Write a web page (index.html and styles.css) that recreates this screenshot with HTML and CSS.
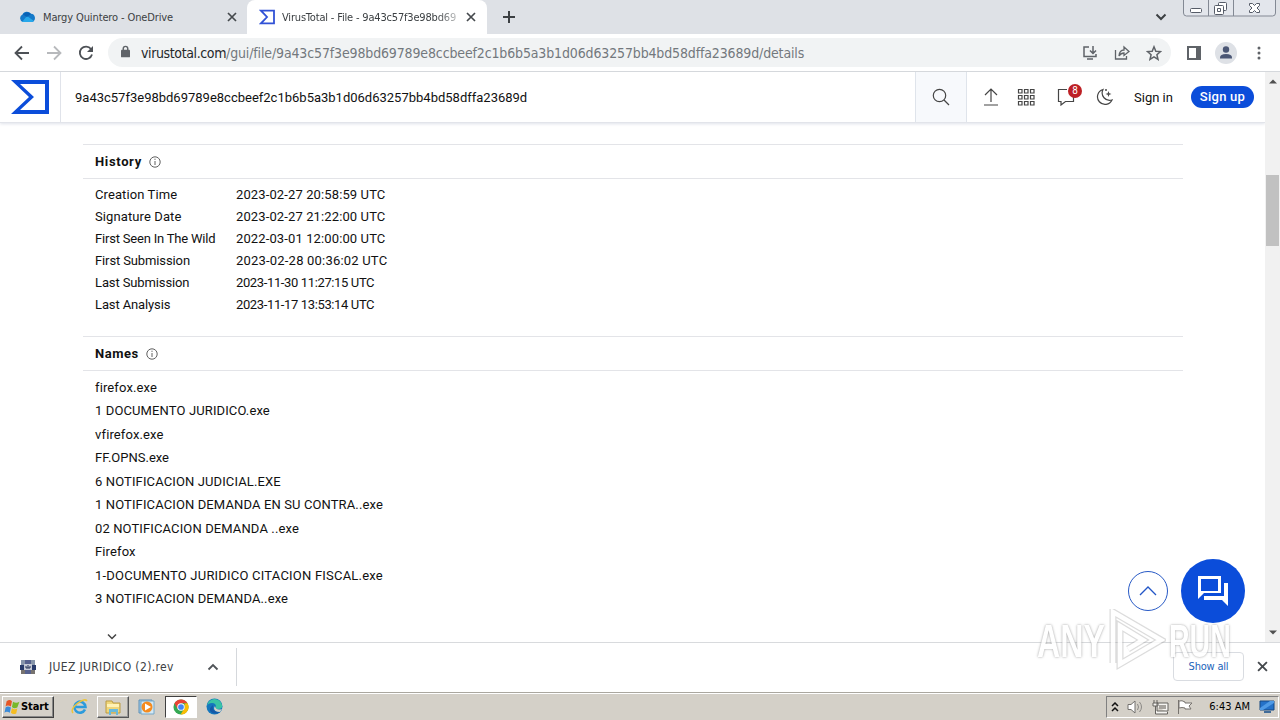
FILE: index.html
```html
<!DOCTYPE html>
<html lang="en">
<head>
<meta charset="utf-8">
<title>VirusTotal - File</title>
<link rel="stylesheet" href="styles.css">
</head>
<body>
<div class="screen">
  <div class="tabstrip">
    <div class="tab tab-idle">
      <svg class="cloud" width="17" height="12" viewBox="0 0 17 12"><path d="M4 11a4 4 0 0 1-.5-7.500A5 5 0 0 1 12 2.800a4.200 4.200 0 0 1 1 8.200Z" fill="#1479c9"/><path d="M3 11 8 5l7 5q-1 1-2.500 1Z" fill="#28a8ea"/><path d="M4 3.500A5 5 0 0 1 12 3L8 6Z" fill="#0962b5"/></svg>
      <span class="tab-title one">Margy Quintero - OneDrive</span>
      <svg class="tab-x" width="10" height="10" viewBox="0 0 10 10"><path d="m1 1 8 8M9 1 1 9"/></svg>
    </div>
    <div class="tab tab-active">
      <svg width="17" height="16" viewBox="0 0 17 16"><path d="M2 1.700h13v12.600H2L8 8Z" fill="none" stroke="#3152d6" stroke-width="1.800"/></svg>
      <span class="tab-title two">VirusTotal - File - 9a43c57f3e98bd69</span>
      <svg class="tab-x" width="10" height="10" viewBox="0 0 10 10"><path d="m1 1 8 8M9 1 1 9"/></svg>
    </div>
    <svg class="plus" width="14" height="14" viewBox="0 0 14 14"><path d="M7 1v12M1 7h12"/></svg>
    <svg class="tab-search" width="12" height="8" viewBox="0 0 12 8"><path d="m1.500 1.500 4.500 4.500 4.500-4.500"/></svg>
    <svg class="caption" width="94" height="18" viewBox="0 0 94 18"><path d="M.5 0v13q0 3 3 3h86q3 0 3-3V0M25.500 0v16M50.500 0v16" fill="#e3e6ec" stroke="#838994"/><g fill="#fff" stroke="#565c68"><rect x="7.500" y="8.500" width="11" height="4" rx="1"/><rect x="35.500" y="2.500" width="8" height="8" rx="1"/><rect x="31.500" y="5.500" width="9" height="9" rx="1"/><path d="M34.500 8.500h3v3h-3zM66.500 3.500h3l2 2 2-2h3v2l-2.500 2.500 2.500 2.500v2h-3l-2-2-2 2h-3v-2L69 8l-2.500-2.500Z"/></g></svg>
  </div>
  <div class="toolbar">
    <svg width="16" height="16" viewBox="0 0 16 16"><path class="nav" d="M15 8H2m6-6.500L1.500 8 8 14.500"/></svg>
    <svg width="16" height="16" viewBox="0 0 16 16"><path class="nav off" d="M1 8h13M8 1.500 14.500 8 8 14.500"/></svg>
    <svg width="16" height="16" viewBox="0 0 16 16"><path class="nav" d="M13 4A6.200 6.200 0 1 0 14 9.500"/><path d="M15 1v6H9Z" fill="#4d5156"/></svg>
    <div class="omnibox">
      <svg class="lock" width="9" height="13" viewBox="0 0 10 14"><path d="M2.500 6V3.800a2.500 2.500 0 0 1 5 0V6" fill="none" stroke="#5f6368" stroke-width="1.600"/><rect y="5" width="10" height="8.500" rx="1" fill="#5f6368"/></svg>
      <span class="url"><span class="host">virustotal.com</span><span class="path">/gui/file/9a43c57f3e98bd69789e8ccbeef2c1b6b5a3b1d06d63257bb4bd58dffa23689d/details</span></span>
      <div class="omni-actions">
        <svg width="16" height="16" viewBox="0 0 16 16"><path d="M7 2H2v9.500h12V9M5 14h6M11 1v7M8 5.500l3 3 3-3" fill="none" stroke="#5f6368" stroke-width="1.500"/></svg>
        <svg width="16" height="16" viewBox="0 0 16 16"><path d="M1.500 5v9h11v-3M5 11q.5-6 5-6V2l5 4.500-5 4V8Q7 8 5 11Z" fill="none" stroke="#5f6368" stroke-width="1.300"/></svg>
        <svg width="16" height="16" viewBox="0 0 16 16"><path d="m8 1.800 1.800 4.400 4.700.4-3.600 3.100 1.100 4.600L8 11.800l-4 2.500 1.100-4.600-3.600-3.100 4.700-.4Z" fill="none" stroke="#5f6368" stroke-width="1.500"/></svg>
      </div>
    </div>
    <div class="tools">
      <svg width="14" height="14" viewBox="0 0 14 14"><path d="M0 0h14v14H0Zm2 2v10h7V2Z" fill="#5f6368" fill-rule="evenodd"/></svg>
      <svg width="22" height="22" viewBox="0 0 22 22"><circle cx="11" cy="11" r="11" fill="#dee1e6"/><circle cx="11" cy="7.500" r="3.200" fill="#4b5775"/><path d="M5 16.500v-1q0-3.500 6-3.500t6 3.500v1Z" fill="#4b5775"/></svg>
      <svg width="4" height="14" viewBox="0 0 4 14" fill="#5f6368"><circle cx="2" cy="2" r="1.500"/><circle cx="2" cy="7" r="1.500"/><circle cx="2" cy="12" r="1.500"/></svg>
    </div>
  </div>

  <div class="viewport">
    <div class="page">
      <header class="vt-header">
        <div class="vt-logo"><svg width="38" height="34" viewBox="0 0 38 34"><path d="M0 0h38v34H0l18-17Zm9 4 14 13L9 30h25V4Z" fill="#0b4dda" fill-rule="evenodd"/></svg></div>
        <div class="hash">9a43c57f3e98bd69789e8ccbeef2c1b6b5a3b1d06d63257bb4bd58dffa23689d</div>
        <div class="search"><svg width="18" height="18" viewBox="0 0 18 18"><circle cx="7.500" cy="7.500" r="6.200"/><path d="m12 12 5 5"/></svg></div>
        <div class="actions">
          <svg width="16" height="18" viewBox="0 0 16 18"><path d="M8 14V1M2 7l6-6 6 6M1 17h14"/></svg>
          <svg width="18" height="18" viewBox="0 0 18 18"><path d="M1.500 1.500h3.500v3.500H1.500zm6 0H11v3.500H7.500zm6 0H17v3.500h-3.500zm-12 6h3.500V11H1.500zm6 0H11V11H7.500zm6 0H17V11h-3.500zm-12 6h3.500V17H1.500zm6 0H11V17H7.500zm6 0H17V17h-3.500z"/></svg>
          <div class="comment"><svg width="18" height="18" viewBox="0 0 18 18"><path d="M10 1.500H1.500v12H4V17l4.500-3.500h8V8"/></svg><span class="badge">8</span></div>
          <svg width="17" height="18" viewBox="0 0 17 18"><path d="M7 1.500a7.600 7.600 0 1 0 9 10.500A7.500 7.500 0 0 1 7 1.500Z"/><path d="m12.500 3 .8 2.200 2.200.8-2.200.8-.8 2.200-.8-2.200L9.500 6l2.200-.8Z" fill="#4a4a4a" stroke="none"/><circle cx="10" cy="2" r="1" fill="#4a4a4a" stroke="none"/></svg>
          <span class="signin">Sign in</span>
          <span class="signup">Sign up</span>
        </div>
      </header>
      <main class="content">
        <section class="history">
          <h2><span>History</span><svg width="12" height="12" viewBox="0 0 12 12"><circle cx="6" cy="6" r="5.200"/><path d="M6 5v4M6 2.700v1.200"/></svg></h2>
          <dl>
            <dt>Creation Time</dt><dd>2023-02-27 20:58:59 UTC</dd>
            <dt>Signature Date</dt><dd>2023-02-27 21:22:00 UTC</dd>
            <dt>First Seen In The Wild</dt><dd>2022-03-01 12:00:00 UTC</dd>
            <dt>First Submission</dt><dd class="wide">2023-02-28 00:36:02 UTC</dd>
            <dt>Last Submission</dt><dd class="tight">2023-11-30 11:27:15 UTC</dd>
            <dt>Last Analysis</dt><dd class="tight">2023-11-17 13:53:14 UTC</dd>
          </dl>
        </section>
        <section class="names">
          <h2><span>Names</span><svg width="12" height="12" viewBox="0 0 12 12"><circle cx="6" cy="6" r="5.200"/><path d="M6 5v4M6 2.700v1.200"/></svg></h2>
          <ul>
            <li>firefox.exe</li>
            <li>1 DOCUMENTO JURIDICO.exe</li>
            <li>vfirefox.exe</li>
            <li class="plain">FF.OPNS.exe</li>
            <li>6 NOTIFICACION JUDICIAL.EXE</li>
            <li>1 NOTIFICACION DEMANDA EN SU CONTRA..exe</li>
            <li>02 NOTIFICACION DEMANDA ..exe</li>
            <li>Firefox</li>
            <li class="wide">1-DOCUMENTO JURIDICO CITACION FISCAL.exe</li>
            <li>3 NOTIFICACION DEMANDA..exe</li>
          </ul>
          <svg class="more" width="10" height="7" viewBox="0 0 10 7"><path d="m1 1.500 4 4 4-4"/></svg>
        </section>
      </main>
      <div class="floating">
        <div class="to-top"><svg width="18" height="12" viewBox="0 0 18 12"><path d="m1 10 8-8 8 8"/></svg></div>
        <div class="chat"><svg width="32" height="32" viewBox="0 0 32 32"><path d="M1 1h23v17H7l-6 6Zm3 3v12h17V4Z" fill="#fff" fill-rule="evenodd"/><path d="M7 21h20V8h4v23l-6-6H7Z" fill="#fff"/></svg></div>
      </div>
    </div>
    <div class="scrollbar">
      <svg width="8" height="5" viewBox="0 0 8 5"><path d="M0 4.500h8L4 .5Z"/></svg>
      <div class="thumb"></div>
      <svg class="down" width="8" height="5" viewBox="0 0 8 5"><path d="M0 .5h8l-4 4Z"/></svg>
    </div>
  </div>

  <div class="downloads">
    <svg width="16" height="16" viewBox="0 0 16 16"><path d="M1 1h14v5H1Z" fill="#8795aa"/><path d="M0 6h16v5H0Z" fill="#293b6b"/><path d="M1 11h14v4H1Z" fill="#77736f"/><path d="M5 1h6v14H5Z" fill="#56618d"/><path d="M4 5h8v6H4Z" fill="#c6cbd7"/><path d="M6 7v2h4V7M8 6v3" fill="none" stroke="#253257"/></svg>
    <span class="filename">JUEZ JURIDICO (2).rev</span>
    <svg class="expand" width="12" height="8" viewBox="0 0 12 8"><path d="m1.500 6.500 4.500-4.500 4.500 4.500"/></svg>
    <div class="divider"></div>
    <div class="showall">Show all</div>
    <svg class="tab-x" width="11" height="11" viewBox="0 0 10 10"><path d="m1 1 8 8M9 1 1 9"/></svg>
  </div>

  <div class="taskbar">
    <div class="start"><svg width="17" height="16" viewBox="0 0 15 15"><path d="M2 2q3-2 5 0L6 7Q3 5 1 7Z" fill="#e55625"/><path d="M8 2.500q3 2 6 0L12 8q-3 1.500-5-.5Z" fill="#78b82a"/><path d="M1 8q2-2 5 0l-1 5q-3-2-5 0Z" fill="#3b8bd8"/><path d="M7 8.500q2 2 5 .5l-1 4.500q-3 1.500-5-.5Z" fill="#f5bd22"/></svg>Start</div>
    <div class="task ie"><svg width="18" height="18" viewBox="0 0 18 18"><path d="M14 11.500A5.500 5.500 0 1 1 14.500 9H5" fill="none" stroke="#2c9bdc" stroke-width="2.600"/><path d="M2 15Q-1 11 7 5q7-5 9-2" fill="none" stroke="#ecc43c" stroke-width="1.500"/></svg></div>
    <div class="task raised"><svg width="18" height="18" viewBox="0 0 18 18"><path d="M2 3h6l1 2h7v10H2Z" fill="#efd67a" stroke="#bb9b43"/><path d="M3 6h12v3H3Z" fill="#fff2b5"/><path d="M5 17v-6h9v6h-2v-3H7v3Z" fill="#68b9dc"/></svg></div>
    <div class="task media"><svg width="18" height="18" viewBox="0 0 18 18"><path d="M1 2h13v13H1Z" fill="#9cc7e6" stroke="#5f91b7"/><path d="M3 3h13v13H3Z" fill="#d2e8f5" stroke="#77a8c7"/><circle cx="9" cy="9" r="5.500" fill="#f58b1e"/><path d="m7 5.500 6 3.500-6 3.500Z" fill="#fff"/></svg></div>
    <div class="task pressed"><svg width="16" height="16" viewBox="0 0 18 18"><circle cx="9" cy="9" r="8.500" fill="#34a853"/><path d="M1.600 4.800A8.500 8.500 0 0 1 16.400 4.800H9L5 11Z" fill="#ea4335"/><path d="M16.400 4.800A8.500 8.500 0 0 1 8.500 17.500L13 10V5Z" fill="#fbbc04"/><circle cx="9" cy="9" r="4.200" fill="#fff"/><circle cx="9" cy="9" r="3.200" fill="#4285f4"/></svg></div>
    <div class="task edge"><svg width="17" height="17" viewBox="0 0 17 17"><circle cx="8.500" cy="8.500" r="8" fill="#1476bd"/><path d="M1 8a7.600 7.600 0 0 1 15-1q1 4-4 4-3 0-2-2 0-4-4-4-4 0-5 3Z" fill="#39c4a5"/><path d="M7 7q-2 7 7 7-5 3-9 0-3-3 2-7Z" fill="#1459a7"/><path d="M9 8q1 5 7 3l-2 3q-6 0-6-4Z" fill="#d4d0c8"/></svg></div>
    <div class="tray">
      <svg width="8" height="10" viewBox="0 0 8 10"><path d="m1 4 3-3 3 3M1 9l3-3 3 3" fill="none" stroke="#111" stroke-width="1.500"/></svg>
      <svg width="17" height="16" viewBox="0 0 17 16"><path d="M1 5.500h3L8 2v12l-4-3.500H1Z" fill="#fff" stroke="#73716e"/><path d="M10.500 5q2 3 0 6M12.500 3q4 5 0 10" fill="none" stroke="#8a8885"/></svg>
      <svg width="17" height="16" viewBox="0 0 17 16"><path d="M5 4h11v8H5ZM2 1v3M5 1v3M1 4h5v3H1ZM3.500 7v8h12v-2" fill="#f5f4f1" stroke="#65635f"/><path d="M7 6h7v4H7Z" fill="#a6a39e"/></svg>
      <svg width="17" height="16" viewBox="0 0 17 16"><path d="M1.500 1v14M2 2q3-1 6 1v1h7l-3 3 2 3H8V9Q5 8 2 9Z" fill="#fff" stroke="#77736e"/></svg>
      <time>6:43 AM</time>
      <svg width="16" height="14" viewBox="0 0 16 14"><path d="M1 1h14v9H1Z" fill="#2471c8" stroke="#174881"/><path d="m1 8 10-7h4v2L4 10H1Z" fill="#4f9ae5"/><path d="M5 12h7" stroke="#416c99" stroke-width="2"/></svg>
    </div>
  </div>

  <div class="watermark"><span class="any">ANY</span><svg width="58" height="64" viewBox="0 0 58 64"><path d="M5 54V3l48 28L12 55V17l23 14-15 9" fill="none" stroke="#999" stroke-opacity=".4" stroke-width="7"/><path d="M5 54V3l48 28L12 55V17l23 14-15 9" fill="none" stroke="#fff" stroke-width="4.500"/></svg><span class="run">RUN</span></div>
</div>
</body>
</html>
```
FILE: styles.css
```css
* { box-sizing: border-box; }
body { margin: 0; background: #fff; overflow: hidden; }
svg { display: block; flex: none; }
.screen { width: 1280px; height: 720px; display: flex; flex-direction: column; position: relative; font: 13px Roboto, "Liberation Sans", sans-serif; color: #111; }
.tabstrip { height: 34px; background: #dee1e6; display: flex; align-items: center; flex: none; font: 11px "DejaVu Sans Condensed", "DejaVu Sans", sans-serif; }
.tab { height: 34px; display: flex; align-items: center; white-space: nowrap; }
.tab-idle { width: 247px; padding: 0 10px 0 19px; }
.tab-active { width: 240px; padding: 0 11px 0 12px; background: #fff; border-radius: 8px 8px 0 0; }
.tab-title { flex: 1; overflow: hidden; color: #3c4043; }
.one { margin-left: 7px; letter-spacing: -0.12px; }
.two { margin-left: 6px; margin-right: 8px; letter-spacing: -0.18px; -webkit-mask-image: linear-gradient(90deg, #000 88%, #0004); mask-image: linear-gradient(90deg, #000 88%, #0004); }
.tab-x { fill: none; stroke: #45494d; stroke-width: 1.7; }
.plus { margin-left: 15px; fill: none; stroke: #3c4043; stroke-width: 2; }
.tab-search { margin-left: auto; margin-right: 16px; fill: none; stroke: #3c4043; stroke-width: 2; }
.caption { align-self: flex-start; margin-right: 3px; }
.toolbar { height: 38px; border-bottom: 1px solid #d5d8dc; flex: none; display: flex; align-items: center; padding: 0 18px 0 14px; gap: 16px; }
.nav { fill: none; stroke: #4d5156; stroke-width: 1.8; }
.nav.off { stroke: #b7b9bc; }
.omnibox { height: 29px; width: 1063px; flex: none; margin-left: -2px; background: #f1f3f4; border-radius: 15px; display: flex; align-items: center; padding: 0 9px 0 13px; }
.lock { margin-bottom: 2px; }
.url { margin-left: 11px; font: 14px "DejaVu Sans Condensed", "DejaVu Sans", sans-serif; white-space: nowrap; }
.host { color: #25282b; letter-spacing: -0.38px; }
.path { color: #73787d; letter-spacing: -0.14px; }
.omni-actions { margin-left: auto; display: flex; gap: 16px; }
.tools { display: flex; align-items: center; gap: 14px; }
.tools svg:last-child { margin-left: 6px; }
.viewport { height: 570px; display: flex; flex: none; }
.page { width: 1265px; position: relative; overflow: hidden; }
.vt-header { height: 51px; display: flex; border-bottom: 1px solid #e2e4ea; box-shadow: 0 1px 3px #dfe2ea; }
.vt-logo { width: 61px; border-right: 1px solid #e0e3ea; display: flex; align-items: center; justify-content: flex-end; padding-right: 11px; }
.hash { width: 854px; display: flex; align-items: center; padding-left: 14px; }
.search { width: 52px; border: solid #dfe4eb; border-width: 0 1px; background: #f7f9fc; display: flex; align-items: center; justify-content: center; }
.search svg, .actions svg { fill: none; stroke: #454545; stroke-width: 1.2; }
.actions { display: flex; align-items: center; padding-left: 16px; }
.actions > svg:nth-child(2) { margin-left: 18px; margin-right: 1px; }
.comment { position: relative; margin-left: 21px; margin-right: 21px; }
.badge { position: absolute; left: 11px; top: -4px; width: 14px; height: 14px; border-radius: 50%; background: #bd2025; color: #fff; font-size: 10px; line-height: 14px; text-align: center; }
.signin { margin-left: 21px; width: 40px; white-space: nowrap; }
.signup { margin-left: 17px; width: 63px; height: 22px; border-radius: 11px; background: #0b4dda; color: #fff; text-align: center; line-height: 22px; font-weight: 500; letter-spacing: .25px; }
.content { padding: 21px 82px 0 83px; }
h2 { height: 35px; margin: 0; border: solid #e3e4e8; border-width: 1px 0; padding-left: 12px; display: flex; align-items: center; gap: 7px; font-size: 13px; letter-spacing: .5px; }
h2 span { min-width: 43px; }
.history h2 span { min-width: 47px; letter-spacing: .65px; }
h2 svg { fill: none; stroke: #606060; }
dl { display: grid; grid-template-columns: 141px 1fr; grid-auto-rows: 22px; align-items: center; margin: 4px 0 21px; padding-left: 12px; }
dt, dd { margin: 0; white-space: nowrap; letter-spacing: -0.12px; }
dt:first-of-type, dt:nth-of-type(2) { letter-spacing: .1px; }
dt:nth-of-type(3) { letter-spacing: -0.2px; }
dd { letter-spacing: .12px; }
dd.wide { letter-spacing: .2px; }
dd.tight { letter-spacing: -0.37px; }
ul { list-style: none; margin: 5px 0 0; padding: 0 0 0 12px; letter-spacing: .12px; }
li { height: 23.47px; line-height: 23.47px; white-space: nowrap; }
li.plain { letter-spacing: 0; }
li.wide { letter-spacing: .21px; }
.more { margin: 22px 0 0 24px; fill: none; stroke: #444; stroke-width: 1.5; }
.floating { position: absolute; right: 20px; bottom: 19px; display: flex; gap: 13px; align-items: center; }
.to-top { width: 40px; height: 40px; border: 1px solid #285ac6; border-radius: 50%; background: #fff; display: flex; align-items: center; justify-content: center; }
.to-top svg { fill: none; stroke: #2256c7; stroke-width: 1.3; }
.chat { width: 64px; height: 64px; border-radius: 50%; background: #0b4dda; display: flex; align-items: center; justify-content: center; }
.scrollbar { width: 15px; background: #f1f1f1; display: flex; flex-direction: column; align-items: center; padding: 7px 0; }
.scrollbar svg { fill: #505050; }
.thumb { width: 13px; height: 71px; margin-top: 91px; background: #c1c1c1; }
.down { margin-top: auto; }
.downloads { height: 50px; flex: none; border-top: 1px solid #d8dadd; display: flex; align-items: center; padding: 0 12px 2px 20px; font: 11px "DejaVu Sans Condensed", "DejaVu Sans", sans-serif; color: #3c4043; }
.filename { width: 145px; margin-left: 13px; white-space: nowrap; font-size: 12px; letter-spacing: .35px; }
.expand { margin-left: 13px; fill: none; stroke: #505458; stroke-width: 1.8; }
.divider { margin-left: 17px; height: 38px; border-left: 1px solid #d5d8dc; }
.showall { margin-left: auto; margin-right: 13px; width: 71px; height: 29px; border: 1px solid #d9dce1; border-radius: 4px; color: #1d64ba; line-height: 27px; text-align: center; letter-spacing: -0.2px; }
.taskbar { height: 28px; flex: none; background: #d4d0c8; border-top: 1px solid #aaa79f; box-shadow: inset 0 1px #fff; display: flex; align-items: center; padding: 1px 1px 1px 2px; font: 11px "DejaVu Sans Condensed", "DejaVu Sans", sans-serif; color: #000; }
.start { width: 52px; height: 22px; display: flex; align-items: center; gap: 0; padding-left: 1px; border: 1px solid; border-color: #fff #404040 #404040 #fff; font-weight: bold; letter-spacing: -0.1px; box-shadow: inset -1px -1px #888; }
.task { width: 32px; height: 22px; display: flex; align-items: center; justify-content: center; }
.ie { margin-left: 10px; }
.raised { margin-left: 1px; border: 1px solid; border-color: #fff #555 #555 #fff; box-shadow: inset -1px -1px #999; }
.media { margin-left: 2px; }
.pressed { margin-left: 2px; background: #fff; border: 1px solid; border-color: #404040 #fff #fff #404040; }
.edge { margin-left: 1px; }
.tray { margin-left: auto; width: 173px; height: 22px; border: 1px solid; border-color: #808080 #fff #fff #808080; display: flex; align-items: center; padding: 0 3px 0 4px; gap: 8px; }
.tray time { margin-left: auto; margin-right: 1px; white-space: nowrap; }
.watermark { position: absolute; left: 1037px; top: 609px; width: 198px; height: 64px; display: flex; align-items: center; color: #fff; font: bold 46px/64px "Liberation Sans", sans-serif; text-shadow: 0 0 3px #888; opacity: .85; pointer-events: none; }
.watermark svg { margin-left: 3px; }
.any, .run { width: 68px; transform: scaleX(.7); transform-origin: 0 50%; white-space: nowrap; }
.run { width: 64px; margin-left: 3px; transform: scaleX(.62); }
```
